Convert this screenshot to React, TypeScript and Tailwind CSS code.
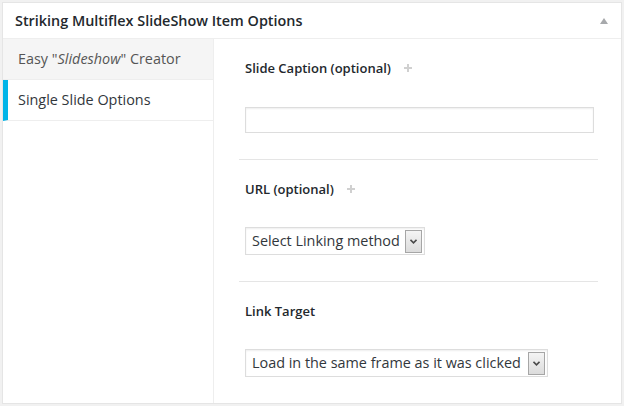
import React from "react";

function Plus() {
    return (
        <svg width="8" height="8" viewBox="0 0 8 8" className="ml-[13px] mt-[-3px]">
            <rect x="3" y="0" width="2" height="8" fill="#d0d0d0"/>
            <rect x="0" y="3" width="8" height="2" fill="#d0d0d0"/>
        </svg>
    );
}

function FakeSelect({value, width}: { value: string; width: string }) {
    return (
        <div
            className={`${width} h-[28px] ml-[6px] border border-[#ddd] bg-white shadow-[inset_0_1px_2px_rgba(0,0,0,0.07)] flex items-center justify-between pl-[6px] pr-[2px]`}>
            <span className="text-[14.4px] text-[#32373c] leading-[20px] whitespace-nowrap">{value}</span>
            <div
                className="w-[17px] h-[23px] shrink-0 mt-[1px] border border-[#a6a6a6] bg-gradient-to-b from-[#f4f4f4] to-[#dcdcdc] flex items-center justify-center">
                <svg width="7" height="5" viewBox="0 0 7 5">
                    <path d="M0.5 0.8 L3.5 3.8 L6.5 0.8" stroke="#4a4a4a" strokeWidth="1.6" fill="none"/>
                </svg>
            </div>
        </div>
    );
}

export default function App() {
    return (
        <main className="w-[624px] h-[406px] bg-[#f1f1f1] p-[2px] font-['Open_Sans',sans-serif]">
            <div className="h-[402px] border border-[#e5e5e5] bg-white flex flex-col">
                <div className="h-[36px] shrink-0 border-b border-[#eee] flex items-center justify-between pl-[12px] pr-[13px]">
                    <h2 className="text-[14.4px] font-semibold text-[#23282d]">Striking Multiflex SlideShow Item Options</h2>
                    <svg width="8" height="6" viewBox="0 0 8 6">
                        <polygon points="4,0 8,6 0,6" fill="#a7a9ac"/>
                    </svg>
                </div>
                <div className="flex flex-1">
                    <div className="w-[211px] shrink-0 border-r border-[#eee] flex flex-col">
                        <div className="h-[41px] border-b border-[#eee] bg-[#f5f5f5] flex items-center pl-[15px] text-[14.4px] text-[#555]">
                            Easy "<i>Slideshow</i>" Creator
                        </div>
                        <div className="h-[41px] border-b border-[#eee] bg-white flex items-center text-[14.4px] text-[#32373c] border-l-[5px] border-l-[#00b4e8] pl-[10px]">
                            Single Slide Options
                        </div>
                    </div>
                    <div className="flex-1 flex flex-col pl-[25px] pr-[23px]">
                        <section className="pt-[18px] pb-[26px] border-b border-[#e5e5e5]">
                            <div className="h-[24px] pl-[6px] flex items-center text-[13px] font-semibold text-[#23282d]">
                                Slide Caption (optional)
                                <Plus/>
                            </div>
                            <div className="mt-[26px] ml-[6px] mr-[4px] h-[26px] border border-[#ddd] shadow-[inset_0_1px_2px_rgba(0,0,0,0.07)]"/>
                        </section>
                        <section className="pt-[18px] pb-[26px] border-b border-[#e5e5e5]">
                            <div className="h-[24px] pl-[6px] flex items-center text-[13px] font-semibold text-[#23282d]">
                                URL (optional)
                                <Plus/>
                            </div>
                            <div className="mt-[25px]">
                                <FakeSelect value="Select Linking method" width="w-[180px]"/>
                            </div>
                        </section>
                        <section className="pt-[18px]">
                            <div className="h-[24px] pl-[6px] flex items-center text-[13px] font-semibold text-[#23282d]">
                                Link Target
                            </div>
                            <div className="mt-[25px]">
                                <FakeSelect value="Load in the same frame as it was clicked" width="w-[303px]"/>
                            </div>
                        </section>
                    </div>
                </div>
            </div>
        </main>
    );
}
